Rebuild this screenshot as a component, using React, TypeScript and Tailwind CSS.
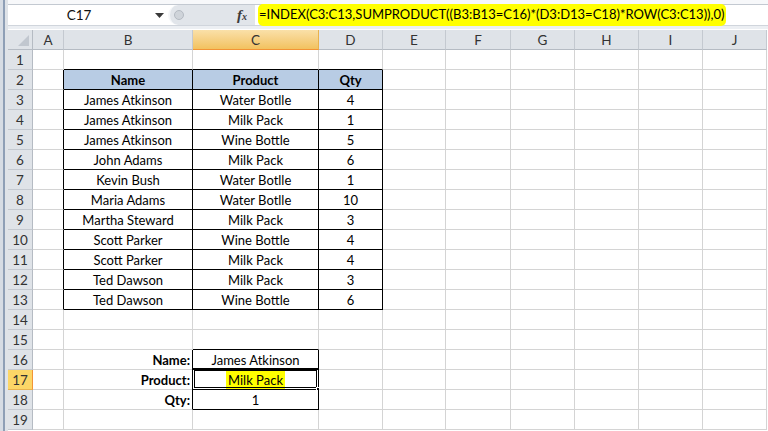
import React from "react";

const COLS = ["A", "B", "C", "D", "E", "F", "G", "H", "I", "J"];

const DATA: [string, string, string][] = [
  ["James Atkinson", "Water Botlle", "4"],
  ["James Atkinson", "Milk Pack", "1"],
  ["James Atkinson", "Wine Bottle", "5"],
  ["John Adams", "Milk Pack", "6"],
  ["Kevin Bush", "Water Botlle", "1"],
  ["Maria Adams", "Water Botlle", "10"],
  ["Martha Steward", "Milk Pack", "3"],
  ["Scott Parker", "Wine Bottle", "4"],
  ["Scott Parker", "Milk Pack", "4"],
  ["Ted Dawson", "Milk Pack", "3"],
  ["Ted Dawson", "Wine Bottle", "6"],
];

const FORMULA = "=INDEX(C3:C13,SUMPRODUCT((B3:B13=C16)*(D3:D13=C18)*ROW(C3:C13)),0)";

// cells with a black border (the data table and the lookup box)
function inTable(r: number, c: number) {
  return (r >= 2 && r <= 13 && c >= 1 && c <= 3) || (r >= 16 && r <= 18 && c === 2);
}

function cellContent(r: number, c: number): { text: string; bold?: boolean; align?: "right" } | null {
  if (r === 2) {
    if (c === 1) return { text: "Name", bold: true };
    if (c === 2) return { text: "Product", bold: true };
    if (c === 3) return { text: "Qty", bold: true };
  }
  if (r >= 3 && r <= 13 && c >= 1 && c <= 3) return { text: DATA[r - 3][c - 1] };
  if (c === 1) {
    if (r === 16) return { text: "Name:", bold: true, align: "right" };
    if (r === 17) return { text: "Product:", bold: true, align: "right" };
    if (r === 18) return { text: "Qty:", bold: true, align: "right" };
  }
  if (c === 2) {
    if (r === 16) return { text: "James Atkinson" };
    if (r === 18) return { text: "1" };
  }
  return null;
}

function Cell({ r, c }: { r: number; c: number }) {
  const right = inTable(r, c) || inTable(r, c + 1);
  const bottom = inTable(r, c) || inTable(r + 1, c);
  const header = r === 2 && c >= 1 && c <= 3;
  const content = cellContent(r, c);
  const selected = r === 17 && c === 2;

  return (
    <div
      className={`relative h-[20px] border-r border-b flex items-center pt-[2px] text-[13px] ${
        right ? "border-r-black" : "border-r-[#d4d4d4]"
      } ${bottom ? "border-b-black" : "border-b-[#d4d4d4]"} ${
        header ? "bg-[#b8cce4]" : "bg-white"
      } ${content?.align === "right" ? "justify-end pr-[2px]" : "justify-center"}`}
    >
      {content && (
        <span className={`whitespace-nowrap leading-none ${content.bold ? "font-bold" : ""}`}>
          {content.text}
        </span>
      )}
      {selected && (
        <>
          <span className="bg-[#ffff00] px-[2px] py-[3px] -mt-[1px] leading-none whitespace-nowrap">Milk Pack</span>
          <div className="absolute -left-[1px] -top-[2px] -right-[1px] -bottom-[1px] border border-black" />
          <div className="absolute left-[1px] top-[0px] right-[1px] bottom-[1px] border border-black" />
          <div className="absolute -right-[4px] -bottom-[4px] w-[6px] h-[6px] bg-black border border-white" />
        </>
      )}
    </div>
  );
}

function FormulaBar() {
  return (
    <div className="flex flex-col h-[30px] bg-white">
      <div className="h-[4px] bg-[#f7f8fa]" />
      <div className="h-[22px] flex border-t border-[#c3c9d1] border-b border-b-[#d0d5dc]">
        <div className="w-[142px] flex items-center justify-center text-[13.5px] text-[#111] pt-[1px]">C17</div>
        <div className="w-[18px] flex items-center justify-center">
          <svg width="9" height="5" viewBox="0 0 9 5">
            <path d="M0 0 L9 0 L4.5 5 Z" fill="#3a3a3a" />
          </svg>
        </div>
        <div className="w-[87px] flex items-center bg-[#e1e5ea] rounded-l-full border-l-2 border-[#f4f6f8] relative">
          <div className="ml-[4px] w-[10px] h-[10px] rounded-full bg-[#cfd4da] border border-[#b4bac2]" />
          <span className="ml-auto mr-[8px] font-['Liberation_Serif',serif] italic font-bold text-[15px] text-[#3b3b3b] leading-none">
            f<span className="text-[10px]">x</span>
          </span>
        </div>
        <div className="flex-1 flex items-start pl-[3px]">
          <span className="bg-[#ffff00] rounded-[5px] h-[22px] -mt-[1px] px-[1px] flex items-center text-[13px] text-black whitespace-nowrap">
            {FORMULA}
          </span>
        </div>
      </div>
      <div className="h-[3px] bg-[#eceff3]" />
    </div>
  );
}

export default function App() {
  const rows = Array.from({ length: 19 }, (_, i) => i + 1);
  return (
    <div className="w-[768px] h-[431px] overflow-hidden bg-white flex font-['Lato',sans-serif] text-black">
      <div className="w-[8px] h-full flex shrink-0">
        <div className="w-[3px] bg-[#d6dce4]" />
        <div className="w-[2px] bg-[#8e9fb6]" />
        <div className="w-[3px] bg-[#dfe3e8]" />
      </div>
      <div className="flex-1 flex flex-col">
        <FormulaBar />
        <div className="grid grid-cols-[25px_31px_129px_126px_64px_63px_65px_64px_64px_64px_64px]">
          <div className="h-[20px] bg-[#dfe3e8] border-r border-b border-[#b5bbc3] relative">
            <svg className="absolute right-[3px] bottom-[3px]" width="11" height="11" viewBox="0 0 11 11">
              <path d="M11 0 L11 11 L0 11 Z" fill="#c1c7cf" />
            </svg>
          </div>
          {COLS.map((k) => (
            <div
              key={k}
              className={`h-[20px] flex items-center justify-center pt-[1px] text-[13.5px] border-r border-b ${
                k === "C"
                  ? "bg-gradient-to-b from-[#fae0a8] to-[#f2c25e] border-r-[#e9b24d] border-b-[#f29436] text-[#333]"
                  : "bg-[#dfe3e8] border-r-[#c4c9d0] border-b-[#b5bbc3] text-[#333]"
              }`}
            >
              {k}
            </div>
          ))}
          {rows.map((r) => (
            <React.Fragment key={r}>
              <div
                className={`h-[20px] flex items-center justify-center pt-[1px] text-[13.5px] text-[#333] border-r border-b ${
                  r === 17
                    ? "bg-[#fcd667] border-r-[#f29436] border-b-[#e9b24d]"
                    : "bg-[#dfe3e8] border-r-[#b5bbc3] border-b-[#c4c9d0]"
                }`}
              >
                {r}
              </div>
              {COLS.map((_, c) => (
                <Cell key={c} r={r} c={c} />
              ))}
            </React.Fragment>
          ))}
        </div>
      </div>
    </div>
  );
}
